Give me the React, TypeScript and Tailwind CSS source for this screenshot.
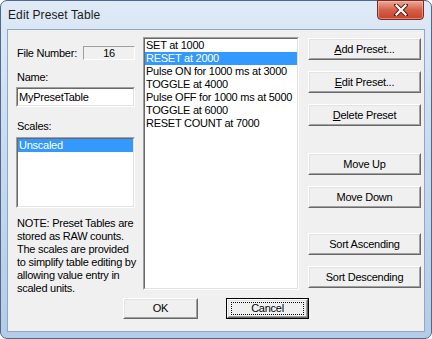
import React from "react";

function Raised({ children, className = "", def = false }: { children: React.ReactNode; className?: string; def?: boolean }) {
  const inner = (
    <div className="h-full w-full border-t border-l border-t-white border-l-white border-b border-r border-b-[#696969] border-r-[#696969]">
      <div className="h-full w-full border-t border-l border-t-[#e3e3e3] border-l-[#e3e3e3] border-b border-r border-b-[#a0a0a0] border-r-[#a0a0a0] bg-[#f0f0f0] flex items-center justify-center">
        {children}
      </div>
    </div>
  );
  if (def) {
    return <div className={`border border-black ${className}`}>{inner}</div>;
  }
  return <div className={className}>{inner}</div>;
}

function Sunken({ children, className = "", bg = "bg-white" }: { children?: React.ReactNode; className?: string; bg?: string }) {
  return (
    <div className={`border-t border-l border-t-[#a0a0a0] border-l-[#a0a0a0] border-b border-r border-b-white border-r-white ${className}`}>
      <div className={`h-full w-full border-t border-l border-t-[#696969] border-l-[#696969] border-b border-r border-b-[#e3e3e3] border-r-[#e3e3e3] ${bg} overflow-hidden`}>
        {children}
      </div>
    </div>
  );
}

const items = [
  "SET at 1000",
  "RESET at 2000",
  "Pulse ON for 1000 ms at 3000",
  "TOGGLE at 4000",
  "Pulse OFF for 1000 ms at 5000",
  "TOGGLE at 6000",
  "RESET COUNT at 7000",
];

export default function App() {
  return (
    <div className="w-[432px] h-[339px] bg-white font-['Liberation_Sans',Arial,sans-serif]">
      <div className="w-[432px] h-[339px] rounded-[7px] border border-[#4d6a8c] bg-gradient-to-b from-[#dfeaf6] via-[#c6d9ee] to-[#b5cce6] flex flex-col">
        {/* title bar */}
        <div className="h-[28px] flex items-start relative">
          <div className="pl-[7px] pt-[7px] text-[12px] leading-[14px] text-[#1b1b1b] tracking-[0.1px]">Edit Preset Table</div>
          <div className="ml-auto mr-[7px] w-[47px] h-[20px] -mt-px rounded-b-[4px] border border-[#7a2a1e] bg-gradient-to-b from-[#e9a99a] via-[#d4604a] to-[#c8412b] flex items-center justify-center shadow-[inset_0_0_0_1px_rgba(255,200,190,0.5)]">
            <svg width="14" height="12" viewBox="0 0 14 12">
              <path d="M2 1 L12 11 M12 1 L2 11" stroke="#5a1a10" strokeWidth="4" strokeLinecap="square" />
              <path d="M2.5 1.5 L11.5 10.5 M11.5 1.5 L2.5 10.5" stroke="#ffffff" strokeWidth="2.2" strokeLinecap="square" />
            </svg>
          </div>
        </div>
        {/* client */}
        <div className="mx-[6px] h-[303px] border border-[#8fa7c4] bg-[#f0f0f0] text-[11px] leading-[13px] tracking-[-0.25px] text-black flex flex-col">
          <div className="h-[260px] flex items-start">
            {/* left column */}
            <div className="ml-[8px] w-[119px] flex flex-col">
              <div className="mt-[16px] h-[14px] flex items-center">
                <span className="pl-[1px]">File Number:</span>
                <div className="ml-auto w-[52px] h-[14px] border-t border-l border-t-[#a0a0a0] border-l-[#a0a0a0] border-b border-r border-b-white border-r-white flex items-center justify-center">
                  16
                </div>
              </div>
              <div className="mt-[11px] pl-[1px]">Name:</div>
              <Sunken className="mt-[3px] h-[20px]">
                <div className="pl-[1px] pt-[2px]">MyPresetTable</div>
              </Sunken>
              <div className="mt-[13px] pl-[1px]">Scales:</div>
              <Sunken className="mt-[4px] h-[71px]">
                <div className="bg-[#3399ff] text-white h-[13px] pl-[1px]">Unscaled</div>
              </Sunken>
              <div className="mt-[9px] pl-[1px] whitespace-nowrap">
                <div>NOTE: Preset Tables are</div>
                <div>stored as RAW counts.</div>
                <div>The scales are provided</div>
                <div>to simplify table editing by</div>
                <div>allowing value entry in</div>
                <div>scaled units.</div>
              </div>
            </div>
            {/* middle list */}
            <Sunken className="ml-[8px] mt-[7px] w-[156px] h-[253px]">
              {items.map((t, i) => (
                <div
                  key={i}
                  className={`h-[13px] pl-[1px] whitespace-nowrap ${i === 1 ? "bg-[#3399ff] text-white" : ""}`}
                >
                  {t}
                </div>
              ))}
            </Sunken>
            {/* right buttons */}
            <div className="ml-[9px] w-[113px] flex flex-col">
              <Raised className="mt-[8px] h-[22px]">
                <span><span className="underline">A</span>dd Preset...</span>
              </Raised>
              <Raised className="mt-[11px] h-[22px]">
                <span><span className="underline">E</span>dit Preset...</span>
              </Raised>
              <Raised className="mt-[11px] h-[22px]">
                <span><span className="underline">D</span>elete Preset</span>
              </Raised>
              <Raised className="mt-[27px] h-[22px]">Move Up</Raised>
              <Raised className="mt-[11px] h-[22px]">Move Down</Raised>
              <Raised className="mt-[25px] h-[22px]">Sort Ascending</Raised>
              <Raised className="mt-[11px] h-[22px]">Sort Descending</Raised>
            </div>
          </div>
          {/* bottom buttons */}
          <div className="mt-[8px] flex">
            <Raised className="ml-[115px] w-[75px] h-[21px]">OK</Raised>
            <Raised def className="ml-[28px] w-[83px] h-[21px]">
              <div className="w-[73px] h-[13px] border border-dotted border-black flex items-center justify-center">Cancel</div>
            </Raised>
          </div>
        </div>
      </div>
    </div>
  );
}
